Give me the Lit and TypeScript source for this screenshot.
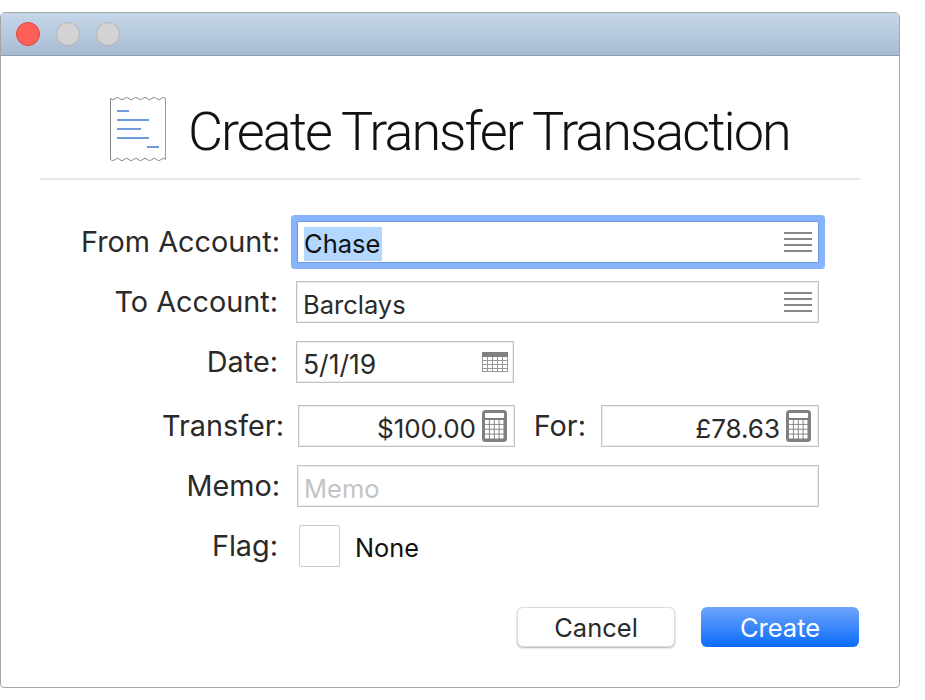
import { LitElement, html, css, svg } from 'lit'
import { customElement } from 'lit/decorators.js'

const listIcon = html`
  <svg class="list-icon" width="28" height="20" viewBox="0 0 28 20">
    <path d="M0 1h28M0 7h28M0 13h28M0 19h28" stroke="#888" stroke-width="2" fill="none"/>
  </svg>`

const calendarIcon = html`
  <svg class="cal-icon" width="26" height="20" viewBox="0 0 26 20">
    <rect x="0" y="0" width="26" height="20" fill="#fff"/>
    <rect x="0" y="0" width="26" height="5" fill="#808080"/>
    <path d="M.5 5v15M5.5 5v15M10.5 5v15M15.5 5v15M20.5 5v15M25.5 5v15M0 8.5h26M0 12.5h26M0 16.5h26M0 19.5h26" stroke="#999" stroke-width="1" fill="none"/>
  </svg>`

const calcKeys = () => {
  const keys = []
  for (let r = 0; r < 4; r++) {
    for (let c = 0; c < 4; c++) {
      keys.push(svg`<rect x=${3 + c * 4.85} y=${10 + r * 4.85} width="3.9" height="3.9" fill="#fff"/>`)
    }
  }
  return keys
}

const calcIcon = html`
  <svg class="calc-icon" width="25" height="32" viewBox="0 0 25 32">
    <rect x="0" y="0" width="25" height="32" rx="3.5" fill="#808080"/>
    <rect x="3" y="3" width="19" height="5" rx="1" fill="#fff"/>
    ${calcKeys()}
  </svg>`

const receiptIcon = html`
  <svg width="56" height="64" viewBox="0 0 56 64">
    <path d="M.5 1.5q2.3 2.6 4.6 0t4.6 0 4.6 0 4.6 0 4.6 0 4.6 0 4.6 0 4.6 0 4.6 0 4.6 0 4.6 0 4.6 0V62.5q-2.3-2.6-4.6 0t-4.6 0-4.6 0-4.6 0-4.6 0-4.6 0-4.6 0-4.6 0-4.6 0-4.6 0-4.6 0-4.6 0Z" fill="#fff" stroke="#858585" stroke-width="1"/>
    <path d="M7 14h12M7 23h32M7 32h24M7 41h32M37 50h12" stroke="#6f9bd8" stroke-width="2" fill="none"/>
  </svg>`

@customElement('app-root')
export class AppRoot extends LitElement {
  static styles = css`
    :host {
      display: block;
      height: 700px;
      padding-top: 12px;
      box-sizing: border-box;
      background: #fff;
      font-family: Inter, "Noto Sans", "Liberation Sans", sans-serif;
      color: #2a2a2a;
    }
    .window {
      width: 900px;
      height: 676px;
      box-sizing: border-box;
      border: 1px solid #a6a6a6;
      border-radius: 5px 5px 4px 4px;
      overflow: hidden;
      background: #fff;
    }
    .titlebar {
      height: 43px;
      box-sizing: border-box;
      display: flex;
      align-items: center;
      gap: 16px;
      padding: 0 0 1px 15px;
      background: linear-gradient(#c6d7e9, #a8bbd2);
      border-bottom: 1px solid #8c9db2;
    }
    .light {
      width: 24px;
      height: 24px;
      box-sizing: border-box;
      border-radius: 50%;
      background: #d3d3d3;
      border: 1px solid #b5b5b5;
    }
    .light.close {
      background: #fe5f57;
      border-color: #e2463f;
    }
    .head {
      height: 124px;
      box-sizing: border-box;
      margin: 0 39px;
      border-bottom: 2px solid #e6e6e6;
      display: flex;
      align-items: flex-start;
      padding: 41px 0 0 70px;
      gap: 22px;
    }
    .title {
      font-family: Roboto, Inter, sans-serif;
      font-size: 54px;
      font-weight: 300;
      line-height: 70px;
      letter-spacing: -2px;
      color: #111;
      white-space: nowrap;
    }
    form {
      display: flex;
      flex-direction: column;
      padding-top: 41px;
    }
    .row {
      display: flex;
      align-items: center;
      height: 42px;
      margin-bottom: 18px;
    }
    .row.wide-gap {
      margin-top: 4px;
    }
    label {
      font-size: 28.8px;
      line-height: 42px;
      text-align: right;
      white-space: nowrap;
      flex: none;
      width: 277px;
    }
    label.long {
      width: 279px;
    }
    label.transfer {
      width: 283px;
    }
    label.for {
      width: 71px;
    }
    .field {
      flex: none;
      height: 42px;
      box-sizing: border-box;
      border: 1px solid #c2c2c2;
      box-shadow: inset 0 0 0 1px #eeeeee;
      display: flex;
      align-items: center;
      justify-content: space-between;
      padding: 0 6px;
      margin-left: 17px;
      width: 522px;
      font-size: 25.5px;
      background: #fff;
    }
    .field.to {
      margin-left: 18px;
      width: 523px;
    }
    .field .value {
      white-space: nowrap;
      position: relative;
      top: 2px;
    }
    .focused {
      border: 1px solid #6c98db;
      box-shadow: 0 0 0 6px #87b4fb;
      border-radius: 1px;
    }
    .selected {
      background: #b3d7ff;
      color: #111;
      line-height: 34px;
      display: inline-block;
      padding-right: 2px;
    }
    .list-icon,
    .cal-icon,
    .calc-icon {
      flex: none;
    }
    .cal-icon {
      margin-right: -1px;
    }
    .field.date {
      margin-left: 18px;
      width: 218px;
      font-size: 26.5px;
    }
    .field.amount {
      justify-content: flex-end;
      gap: 6px;
      margin-left: 14px;
      width: 217px;
      padding-right: 7px;
      font-size: 26px;
    }
    .field.amount.second {
      margin-left: 15px;
      width: 218px;
    }
    .placeholder {
      color: #c4c4c4;
    }
    .flag {
      width: 41px;
      height: 42px;
      box-sizing: border-box;
      border: 1px solid #cbcbcb;
      border-radius: 2px;
      margin-left: 21px;
      flex: none;
    }
    .flag-name {
      font-size: 25.3px;
      color: #111;
      margin-left: 15px;
      position: relative;
      top: 1px;
    }
    .footer {
      display: flex;
      justify-content: flex-end;
      gap: 26px;
      padding: 22px 40px 0 0;
    }
    .btn {
      width: 158px;
      height: 40px;
      box-sizing: border-box;
      border-radius: 6px;
      font: inherit;
      font-size: 25.5px;
      line-height: 38px;
      padding: 2px 0 0;
      text-align: center;
    }
    .btn.cancel {
      background: #fff;
      color: #2a2a2a;
      border: 1px solid #dcdcdc;
      box-shadow: 0 1px 2px rgba(0, 0, 0, 0.3);
      padding-top: 1px;
    }
    .btn.create {
      background: linear-gradient(#6ea4fb, #0a6cfb);
      color: #fff;
      border: none;
    }
  `

  protected override render() {
    return html`
      <div class="window">
        <div class="titlebar">
          <div class="light close"></div>
          <div class="light"></div>
          <div class="light"></div>
        </div>
        <div class="head">
          ${receiptIcon}
          <div class="title">Create Transfer Transaction</div>
        </div>
        <form>
          <div class="row">
            <label class="long">From Account:</label>
            <div class="field focused">
              <span class="value"><span class="selected">Chase</span></span>${listIcon}
            </div>
          </div>
          <div class="row">
            <label>To Account:</label>
            <div class="field to">
              <span class="value">Barclays</span>${listIcon}
            </div>
          </div>
          <div class="row">
            <label>Date:</label>
            <div class="field date">
              <span class="value">5/1/19</span>${calendarIcon}
            </div>
          </div>
          <div class="row wide-gap">
            <label class="transfer">Transfer:</label>
            <div class="field amount">
              <span class="value">$100.00</span>${calcIcon}
            </div>
            <label class="for">For:</label>
            <div class="field amount second">
              <span class="value">£78.63</span>${calcIcon}
            </div>
          </div>
          <div class="row">
            <label class="long">Memo:</label>
            <div class="field">
              <span class="value placeholder">Memo</span>
            </div>
          </div>
          <div class="row">
            <label>Flag:</label>
            <div class="flag"></div>
            <span class="flag-name">None</span>
          </div>
        </form>
        <div class="footer">
          <button class="btn cancel" type="button">Cancel</button>
          <button class="btn create" type="button">Create</button>
        </div>
      </div>
    `
  }
}
